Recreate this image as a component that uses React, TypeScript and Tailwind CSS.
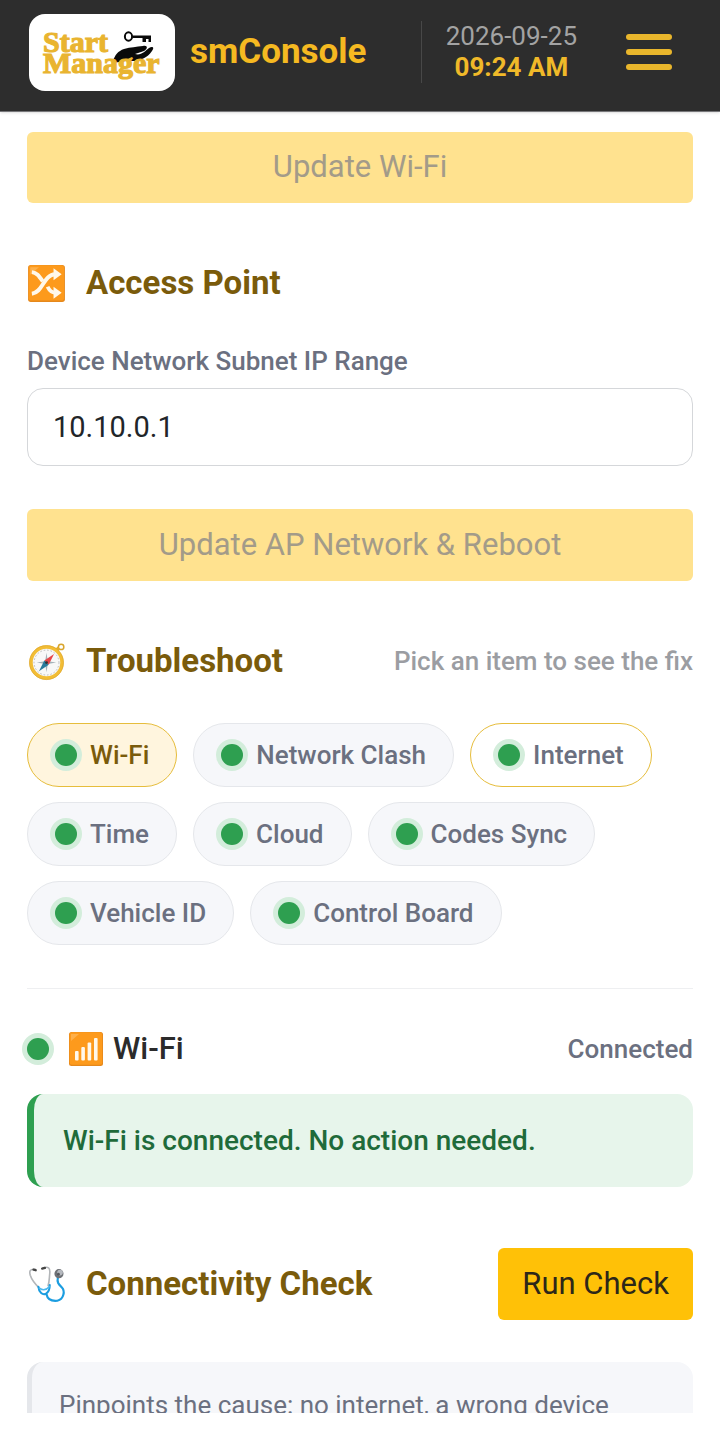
import React, { useState } from "react";

const items = ["Wi-Fi", "Network Clash", "Internet", "Time", "Cloud", "Codes Sync", "Vehicle ID", "Control Board"];

const Logo = () => (
  <svg viewBox="0 0 146 77" className="h-[77px] w-[146px] shrink-0 rounded-[16px] bg-white" role="img" aria-label="Start Manager">
    <g fill="#0a0a0a">
      <path d="M84 47 C86 41 89 37 95 35 C102 33 107 33 114 32 C119 31 119 35 115 37 L106 40 C112 42 116 37 120 34 C123 32 126 33 123 37 C118 44 112 46 105 47 L97 47 C92 48 88 48 84 49 Z" />
      <path d="M104 21.500 h18 v6.500 h-2.500 v-3 h-2.500 v3 h-3.500 v-4 h-9.500 z" />
    </g>
    <ellipse cx="99.500" cy="22.500" rx="3.600" ry="4.200" fill="none" stroke="#0a0a0a" strokeWidth="2" />
    <g fill="#e9b430" stroke="#e9b430" strokeWidth="1.200" fontFamily="'Liberation Serif', serif" fontWeight="700" fontSize="30">
      <text x="14" y="38">Start</text>
      <text x="14" y="59">Manager</text>
    </g>
  </svg>
);

const ShuffleIcon = () => (
  <svg viewBox="0 0 36 36" className="size-[39px] shrink-0" aria-hidden="true">
    <rect x="1" y="1" width="34" height="34" rx="2.500" fill="#e5881c" />
    <rect x="1.600" y="1.200" width="32.600" height="32.600" rx="2.500" fill="#fd9a1c" />
    <path d="M3 3h8L3 10z" fill="#ffc069" opacity=".6" />
    <g stroke="#fff8ea" strokeWidth="3.600" fill="none">
      <path d="M4.500 7.500 C9 8 11 11 14.500 16 M19 21 C21 25 23 26.500 26 26.500" />
      <path d="M4.500 27.500 C15 26 15 10 26 9.500" />
    </g>
    <path d="M24.500 4 L32 9.500 L24.500 15z M24.500 21 L32 26.500 L24.500 32z" fill="#fff8ea" />
  </svg>
);

const CompassIcon = () => (
  <svg viewBox="0 0 36 36" className="size-[39px] shrink-0" aria-hidden="true">
    <circle cx="31.500" cy="4.500" r="2.500" fill="none" stroke="#d9a62e" strokeWidth="1.400" />
    <path d="M26.500 8.500l3-3" stroke="#e2ad2c" strokeWidth="3.500" />
    <circle cx="18" cy="19" r="14.300" fill="#f8f8f8" stroke="#f2bd35" strokeWidth="3.200" />
    <circle cx="18" cy="19" r="15.700" fill="none" stroke="#dca42a" strokeWidth=".6" />
    <circle cx="18" cy="19" r="11.500" fill="none" stroke="#a9a9a9" strokeWidth=".7" strokeDasharray="1.500 1.700" />
    <path d="M18 10l1.200 7.800 7.800 1.200-7.800 1.200L18 28l-1.200-7.800L9 19l7.800-1.200z" fill="#a4b2b9" />
    <path d="M25 11l-5 10-4-4z" fill="#e5464b" />
    <path d="M11 27l5-10 4 4z" fill="#287b9c" />
    <circle cx="18" cy="19" r="1.300" fill="#333" />
  </svg>
);

const SignalIcon = () => (
  <svg viewBox="0 0 36 36" className="size-9 shrink-0" aria-hidden="true">
    <rect x="1" y="1" width="34" height="34" rx="2.500" fill="#e5881c" />
    <rect x="1.600" y="1.200" width="32.600" height="32.600" rx="2.500" fill="#fd9a1c" />
    <path d="M3 3h8L3 10z" fill="#ffc069" opacity=".6" />
    <g fill="#fff8ea">
      <rect x="7" y="20" width="3.600" height="9.500" rx="1" />
      <rect x="13.300" y="16" width="3.600" height="13.500" rx="1" />
      <rect x="19.600" y="11.500" width="3.600" height="18" rx="1" />
      <rect x="26" y="7" width="3.600" height="22.500" rx="1" />
    </g>
  </svg>
);

const StethoscopeIcon = () => (
  <svg viewBox="0 0 36 36" className="size-[39px] shrink-0" aria-hidden="true">
    <g fill="none" strokeLinecap="round">
      <path d="M7.500 4 C2.500 3.500 2 6 3 9.500 C4.500 14 8 18 11 21" stroke="#b3b6b9" strokeWidth="1.500" />
      <path d="M15 2.500 C20 1 21.500 3 21 8 C20.500 13 20.500 16 19.500 19" stroke="#b3b6b9" strokeWidth="1.500" />
      <path d="M6 4.300l2 .5M14 3.300l2.500-.6" stroke="#454545" strokeWidth="2.200" />
      <path d="M10.500 20 C11 25.500 14.500 28 17.500 26.500 C20 25 21 23 21 18.500" stroke="#1b9de0" strokeWidth="1.900" />
      <path d="M11.500 21.500 C14.500 23.500 18 23 20.500 20" stroke="#4bb8ee" strokeWidth="1.500" />
      <path d="M18 27 C19 32 23 33.500 28 33 C34 31.500 35.500 24 32 20.500 C29 17.500 27.500 16 28.500 11.500" stroke="#1b9de0" strokeWidth="2" />
    </g>
    <circle cx="29.500" cy="8" r="4.200" fill="#6d7075" />
    <circle cx="30.500" cy="7" r="2.600" fill="#b5b9bf" />
    <circle cx="29" cy="8.500" r="1.300" fill="#54575c" />
  </svg>
);

const Dot = () => <span className="size-[22px] shrink-0 rounded-full bg-[#2e9f50] ring-5 ring-[#d3eddb]" />;

const SectionTitle = ({ icon, children }: { icon: React.ReactNode; children: React.ReactNode }) => (
  <h2 className="flex items-center gap-5 text-[33px] leading-10 font-bold text-[#7a5b0b]">
    {icon}
    {children}
  </h2>
);

const App = () => {
  const [subnet, setSubnet] = useState("10.10.0.1");
  const [selected, setSelected] = useState("Wi-Fi");

  const chipStyle = (name: string) => {
    if (name === selected) return "border-[#e6bd3c] bg-[#fff5de] text-[#7a5b0b]";
    if (name === "Internet") return "border-[#e6bd3c] bg-white text-[#6b7080]";
    return "border-[#e5e7eb] bg-[#f6f7fa] text-[#6b7080]";
  };

  return (
    <div className="flex h-screen flex-col bg-white font-['Roboto',sans-serif] text-[#222529]">
      <header className="flex shrink-0 items-start border-b border-[#77777a] bg-[#2d2d2d] pt-[14px] pr-12 pb-5 pl-[29px] shadow-sm">
        <Logo />
        <span className="ml-[15px] py-[18px] text-[35px] leading-10 font-bold text-[#f5b921]">smConsole</span>
        <div className="ml-auto flex items-center pt-[7px]">
          <div className="border-l border-[#484848] pr-px pl-6 text-center text-[26px] leading-[31px]">
            <div className="text-[#a3a3a3]">2026-09-25</div>
            <div className="font-bold text-[#f0b929]">09:24 AM</div>
          </div>
          <button type="button" aria-label="Menu" className="ml-12 flex w-[46px] flex-col gap-[9px]">
            <span className="h-[6px] rounded-full bg-[#e9b62c]" />
            <span className="h-[6px] rounded-full bg-[#e9b62c]" />
            <span className="h-[6px] rounded-full bg-[#e9b62c]" />
          </button>
        </div>
      </header>

      <main className="min-h-0 flex-1 overflow-hidden px-[27px] pt-5">
        <button type="button" disabled className="h-[71px] w-full rounded-md bg-[#ffe28f] text-[31px] text-[#a39b89]">
          Update Wi-Fi
        </button>

        <section className="mt-[60px]">
          <SectionTitle icon={<ShuffleIcon />}>Access Point</SectionTitle>
          <label htmlFor="subnet" className="mt-[42px] block text-[26px] leading-8 font-medium text-[#6b7080]">
            Device Network Subnet IP Range
          </label>
          <input
            id="subnet"
            type="text"
            value={subnet}
            onChange={(e) => setSubnet(e.target.value)}
            className="mt-[11px] block h-[78px] w-full rounded-[16px] border border-[#d5d7da] bg-white px-[25px] text-[29px] outline-none"
          />
          <button type="button" disabled className="mt-[43px] h-[72px] w-full rounded-md bg-[#ffe28f] text-[31px] text-[#a39b89]">
            Update AP Network &amp; Reboot
          </button>
        </section>

        <section className="mt-[60px]">
          <div className="flex items-center justify-between">
            <SectionTitle icon={<CompassIcon />}>Troubleshoot</SectionTitle>
            <span className="text-[26px] leading-8 font-medium text-[#9b9da2]">Pick an item to see the fix</span>
          </div>
          <div className="mt-[42px] flex flex-wrap gap-x-4 gap-y-[15px]">
            {items.map((name) => (
              <button
                key={name}
                type="button"
                aria-pressed={name === selected}
                onClick={() => setSelected(name)}
                className={`flex h-16 items-center gap-[13px] rounded-full border px-[27px] text-[26px] font-medium ${chipStyle(name)}`}
              >
                <Dot />
                {name}
              </button>
            ))}
          </div>

          <hr className="mt-[43px] border-[#eeeff1]" />

          <div className="mt-10 flex items-center justify-between">
            <h3 className="flex items-center text-[31px] leading-10 font-medium text-[#2b2b2b]">
              <Dot />
              <span className="ml-[19px] flex items-center gap-[9px]">
                <SignalIcon />
                Wi-Fi
              </span>
            </h3>
            <span className="text-[26px] leading-8 font-medium text-[#6b7080]">Connected</span>
          </div>
          <p className="mt-[25px] rounded-[16px] border-l-7 border-[#2e9f50] bg-[#e7f5eb] py-[30px] pr-5 pl-[29px] text-[28px] leading-[33px] font-medium text-[#1f6b3a]">
            Wi-Fi is connected. No action needed.
          </p>
        </section>

        <section className="mt-[61px]">
          <div className="flex items-center justify-between">
            <SectionTitle icon={<StethoscopeIcon />}>Connectivity Check</SectionTitle>
            <button type="button" className="h-[72px] rounded-md bg-[#ffc107] px-6 text-[31px] text-[#2d2719]">
              Run Check
            </button>
          </div>
          <p className="mt-[42px] rounded-[16px] border-l-5 border-[#e5e7eb] bg-[#f6f7fa] py-6 pr-5 pl-[27px] text-[26px] leading-[38px] text-[#6b7080]">
            Pinpoints the cause: no internet, a wrong device
          </p>
        </section>
      </main>

      <div className="h-[17px] shrink-0 bg-white" />
    </div>
  );
};

export default App;
